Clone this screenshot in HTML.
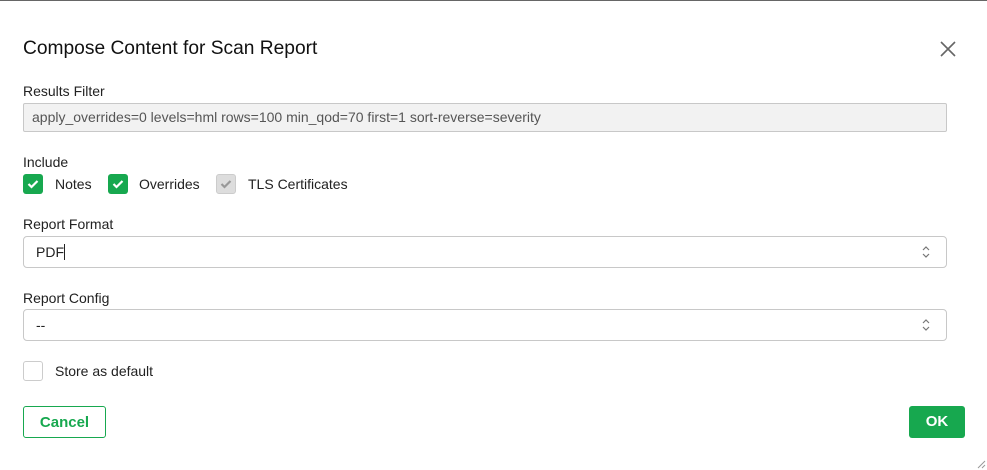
<!DOCTYPE html>
<html><head><style>
body{margin:0;width:987px;height:470px;background:#fff;position:relative;overflow:hidden;font-family:"Liberation Sans",sans-serif;color:#222}
.a{position:absolute}
.lbl{font-size:14px;color:#222}
.box{position:absolute;border:1px solid #c8c8c8;border-radius:4px;box-sizing:border-box}
.cb{position:absolute;width:20px;height:20px;border-radius:3px;box-sizing:border-box;top:174px}
.g{background:#17a84f}
</style></head><body>
<div class="a" style="left:0;top:0;width:987px;height:1px;background:#666"></div>
<div class="a" style="left:23px;top:38px;font-size:19.2px;color:#111">Compose Content for Scan Report</div>
<svg class="a" style="left:940px;top:41px" width="16" height="16"><path d="M1 1L15 15M15 1L1 15" stroke="#666" stroke-width="1.6"/></svg>
<div class="a lbl" style="left:23px;top:83px">Results Filter</div>
<div class="box" style="left:23px;top:103px;width:924px;height:29px;background:#f2f2f2;border-radius:2px"></div>
<div class="a" style="left:32px;top:109px;font-size:14px;color:#555">apply_overrides=0 levels=hml rows=100 min_qod=70 first=1 sort-reverse=severity</div>
<div class="a lbl" style="left:23px;top:154px">Include</div>
<div class="cb g" style="left:23px"><svg width="20" height="20"><path d="M5.5 10l3 3 6-6" stroke="#fff" stroke-width="2.2" fill="none"/></svg></div>
<div class="a lbl" style="left:55px;top:176px">Notes</div>
<div class="cb g" style="left:108px"><svg width="20" height="20"><path d="M5.5 10l3 3 6-6" stroke="#fff" stroke-width="2.2" fill="none"/></svg></div>
<div class="a lbl" style="left:139px;top:176px">Overrides</div>
<div class="cb" style="left:216px;background:#ddd;border:1px solid #ccc"><svg width="18" height="18"><path d="M4.5 9l3 3 6-6" stroke="#999" stroke-width="2.2" fill="none"/></svg></div>
<div class="a lbl" style="left:248px;top:176px">TLS Certificates</div>
<div class="a lbl" style="left:23px;top:216px">Report Format</div>
<div class="box" style="left:23px;top:236px;width:924px;height:32px"></div>
<div class="a" style="left:36px;top:244px;font-size:14px">PDF<span style="display:inline-block;width:1px;height:16px;background:#222;vertical-align:-3px"></span></div>
<svg class="a" style="left:920px;top:245px" width="12" height="14"><path d="M3 5l3-3 3 3M3 9l3 3 3-3" stroke="#777" stroke-width="1.2" fill="none"/></svg>
<div class="a lbl" style="left:23px;top:290px">Report Config</div>
<div class="box" style="left:23px;top:309px;width:924px;height:32px"></div>
<div class="a" style="left:36px;top:317px;font-size:14px">--</div>
<svg class="a" style="left:920px;top:318px" width="12" height="14"><path d="M3 5l3-3 3 3M3 9l3 3 3-3" stroke="#777" stroke-width="1.2" fill="none"/></svg>
<div class="cb" style="left:23px;top:361px;border:1px solid #ccc"></div>
<div class="a lbl" style="left:55px;top:363px">Store as default</div>
<div class="box" style="left:23px;top:406px;width:83px;height:32px;border-color:#17a84f;border-radius:3px;color:#17a84f;font-weight:bold;font-size:15px;text-align:center;line-height:31px">Cancel</div>
<div class="a" style="left:909px;top:406px;width:56px;height:32px;background:#17a84f;border-radius:3px;color:#fff;font-weight:bold;font-size:15px;text-align:center;line-height:32px">OK</div>
<svg class="a" style="left:977px;top:460px" width="9" height="9"><path d="M1 8L8 1M5 8L8 5" stroke="#999" stroke-width="1"/></svg>
</body></html>
